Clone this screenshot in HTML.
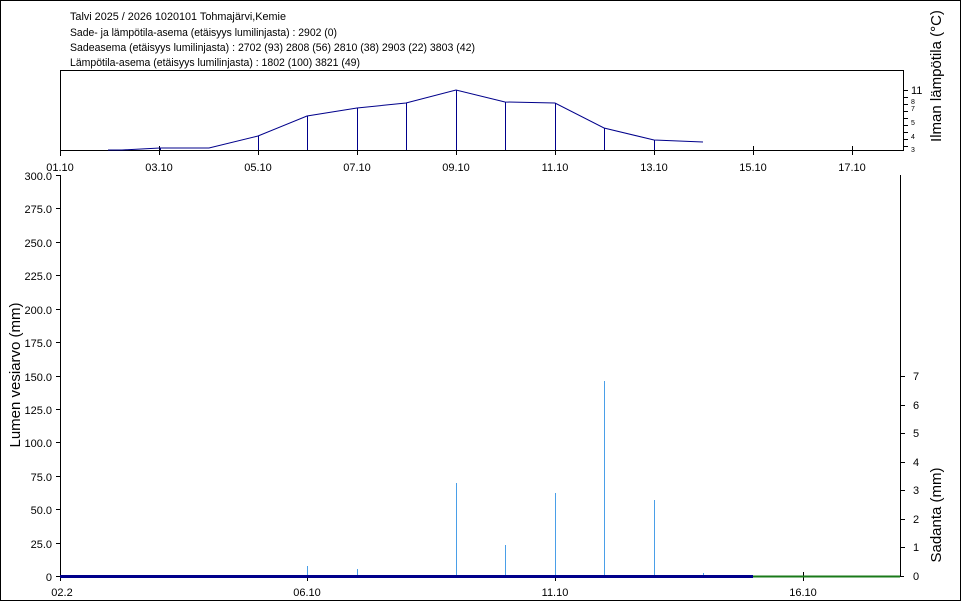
<!DOCTYPE html>
<html><head><meta charset="utf-8"><style>
html,body{margin:0;padding:0;background:#fff;}
svg{display:block;font-family:"Liberation Sans",sans-serif;}
</style></head><body>
<svg width="961" height="601" viewBox="0 0 961 601" xmlns="http://www.w3.org/2000/svg">
<rect x="0.5" y="0.5" width="960" height="600" fill="#fff" stroke="#000"/>
<g font-size="11" fill="#000">
<text x="70" y="20" textLength="216" lengthAdjust="spacingAndGlyphs">Talvi 2025 / 2026 1020101 Tohmajärvi,Kemie</text>
<text x="70" y="36" textLength="267" lengthAdjust="spacingAndGlyphs">Sade- ja lämpötila-asema (etäisyys lumilinjasta) :  2902 (0)</text>
<text x="70" y="51" textLength="405" lengthAdjust="spacingAndGlyphs">Sadeasema (etäisyys lumilinjasta) :  2702 (93) 2808 (56) 2810 (38) 2903 (22) 3803 (42)</text>
<text x="70" y="66" textLength="290" lengthAdjust="spacingAndGlyphs">Lämpötila-asema (etäisyys lumilinjasta) :  1802 (100) 3821 (49)</text>
</g>
<rect x="60.5" y="70.5" width="843" height="80" fill="none" stroke="#000"/>
<g stroke="#000">
<line x1="60" y1="150.5" x2="904" y2="150.5"/>
<line x1="159.5" y1="146" x2="159.5" y2="155"/><line x1="258.5" y1="146" x2="258.5" y2="155"/>
<line x1="357.5" y1="146" x2="357.5" y2="155"/><line x1="456.5" y1="146" x2="456.5" y2="155"/>
<line x1="555.5" y1="146" x2="555.5" y2="155"/><line x1="654.5" y1="146" x2="654.5" y2="155"/>
<line x1="753.5" y1="146" x2="753.5" y2="155"/><line x1="852.5" y1="146" x2="852.5" y2="155"/>
<line x1="60.5" y1="150" x2="60.5" y2="156"/>
<line x1="903" y1="90.5" x2="908" y2="90.5"/><line x1="903" y1="97.5" x2="908" y2="97.5"/>
<line x1="903" y1="104.5" x2="908" y2="104.5"/><line x1="903" y1="111.5" x2="908" y2="111.5"/>
<line x1="903" y1="118.5" x2="908" y2="118.5"/><line x1="903" y1="125.5" x2="908" y2="125.5"/>
<line x1="903" y1="132.5" x2="908" y2="132.5"/><line x1="903" y1="139.5" x2="908" y2="139.5"/>
<line x1="903" y1="146.5" x2="908" y2="146.5"/>
</g>
<g font-size="11" fill="#000">
<text x="911" y="94">11</text>
<text x="911" y="104" font-size="7">8</text><text x="911" y="111" font-size="7">7</text>
<text x="911" y="125" font-size="7">5</text><text x="911" y="139" font-size="7">4</text>
<text x="911" y="152" font-size="7">3</text>
</g>
<g font-size="11" fill="#000" text-anchor="middle">
<text x="60" y="171">01.10</text><text x="159" y="171">03.10</text><text x="258" y="171">05.10</text>
<text x="357" y="171">07.10</text><text x="456" y="171">09.10</text><text x="555" y="171">11.10</text>
<text x="654" y="171">13.10</text><text x="753" y="171">15.10</text><text x="852" y="171">17.10</text>
</g>
<g stroke="#00008b" fill="none">
<polyline points="108,150 122,150 160,148 209,148 258,136 307,116 357,108 406,103 456,90 505,102 555,103 604,128 654,140 703,142"/>
<path d="M160.5 148V150M258.5 136V150M307.5 116V150M357.5 108V150M406.5 103V150M456.5 90V150M505.5 102V150M555.5 103V150M604.5 128V150M654.5 140V150"/>
</g>
<text transform="translate(941,76) rotate(-90)" text-anchor="middle" font-size="15" fill="#000">Ilman lämpötila (°C)</text>
<g stroke="#000">
<line x1="60.5" y1="175" x2="60.5" y2="577"/>
<line x1="900.5" y1="175" x2="900.5" y2="577"/>
<line x1="56" y1="576.5" x2="904" y2="576.5"/>
</g>
<g stroke="#000">
<line x1="56" y1="175.5" x2="60" y2="175.5"/><line x1="56" y1="208.5" x2="60" y2="208.5"/>
<line x1="56" y1="242.5" x2="60" y2="242.5"/><line x1="56" y1="275.5" x2="60" y2="275.5"/>
<line x1="56" y1="309.5" x2="60" y2="309.5"/><line x1="56" y1="342.5" x2="60" y2="342.5"/>
<line x1="56" y1="376.5" x2="60" y2="376.5"/><line x1="56" y1="409.5" x2="60" y2="409.5"/>
<line x1="56" y1="442.5" x2="60" y2="442.5"/><line x1="56" y1="476.5" x2="60" y2="476.5"/>
<line x1="56" y1="509.5" x2="60" y2="509.5"/><line x1="56" y1="543.5" x2="60" y2="543.5"/>
<line x1="900" y1="376.5" x2="905" y2="376.5"/><line x1="900" y1="405.5" x2="905" y2="405.5"/>
<line x1="900" y1="433.5" x2="905" y2="433.5"/><line x1="900" y1="462.5" x2="905" y2="462.5"/>
<line x1="900" y1="490.5" x2="905" y2="490.5"/><line x1="900" y1="519.5" x2="905" y2="519.5"/>
<line x1="900" y1="547.5" x2="905" y2="547.5"/>
<line x1="60.5" y1="576" x2="60.5" y2="581"/><line x1="307.5" y1="576" x2="307.5" y2="581"/>
<line x1="555.5" y1="576" x2="555.5" y2="581"/><line x1="803.5" y1="572" x2="803.5" y2="581"/>
</g>
<g font-size="11" fill="#000" text-anchor="end">
<text x="52" y="180">300.0</text><text x="52" y="213">275.0</text><text x="52" y="247">250.0</text>
<text x="52" y="280">225.0</text><text x="52" y="314">200.0</text><text x="52" y="347">175.0</text>
<text x="52" y="381">150.0</text><text x="52" y="414">125.0</text><text x="52" y="447">100.0</text>
<text x="52" y="481">75.0</text><text x="52" y="514">50.0</text><text x="52" y="548">25.0</text>
<text x="52" y="581">0</text>
</g>
<g font-size="11" fill="#000">
<text x="913" y="380">7</text><text x="913" y="409">6</text><text x="913" y="437">5</text>
<text x="913" y="466">4</text><text x="913" y="494">3</text><text x="913" y="523">2</text>
<text x="913" y="551">1</text><text x="913" y="580">0</text>
</g>
<g font-size="11" fill="#000" text-anchor="middle">
<text x="62" y="596">02.2</text><text x="307" y="596">06.10</text><text x="555" y="596">11.10</text><text x="803" y="596">16.10</text>
</g>
<g stroke="#4a9fe8">
<line x1="307.5" y1="566" x2="307.5" y2="576"/><line x1="357.5" y1="569" x2="357.5" y2="576"/>
<line x1="456.5" y1="483" x2="456.5" y2="576"/><line x1="505.5" y1="545" x2="505.5" y2="576"/>
<line x1="555.5" y1="493" x2="555.5" y2="576"/><line x1="604.5" y1="381" x2="604.5" y2="576"/>
<line x1="654.5" y1="500" x2="654.5" y2="576"/><line x1="703.5" y1="573" x2="703.5" y2="576"/>
</g>
<rect x="60" y="575" width="693" height="3" fill="#00008b"/>
<line x1="753" y1="576.5" x2="900" y2="576.5" stroke="#1a7a1a" stroke-width="2"/>
<text transform="translate(20,375) rotate(-90)" text-anchor="middle" font-size="15" fill="#000">Lumen vesiarvo (mm)</text>
<text transform="translate(941,515) rotate(-90)" text-anchor="middle" font-size="15" fill="#000">Sadanta (mm)</text>
</svg>
</body></html>
